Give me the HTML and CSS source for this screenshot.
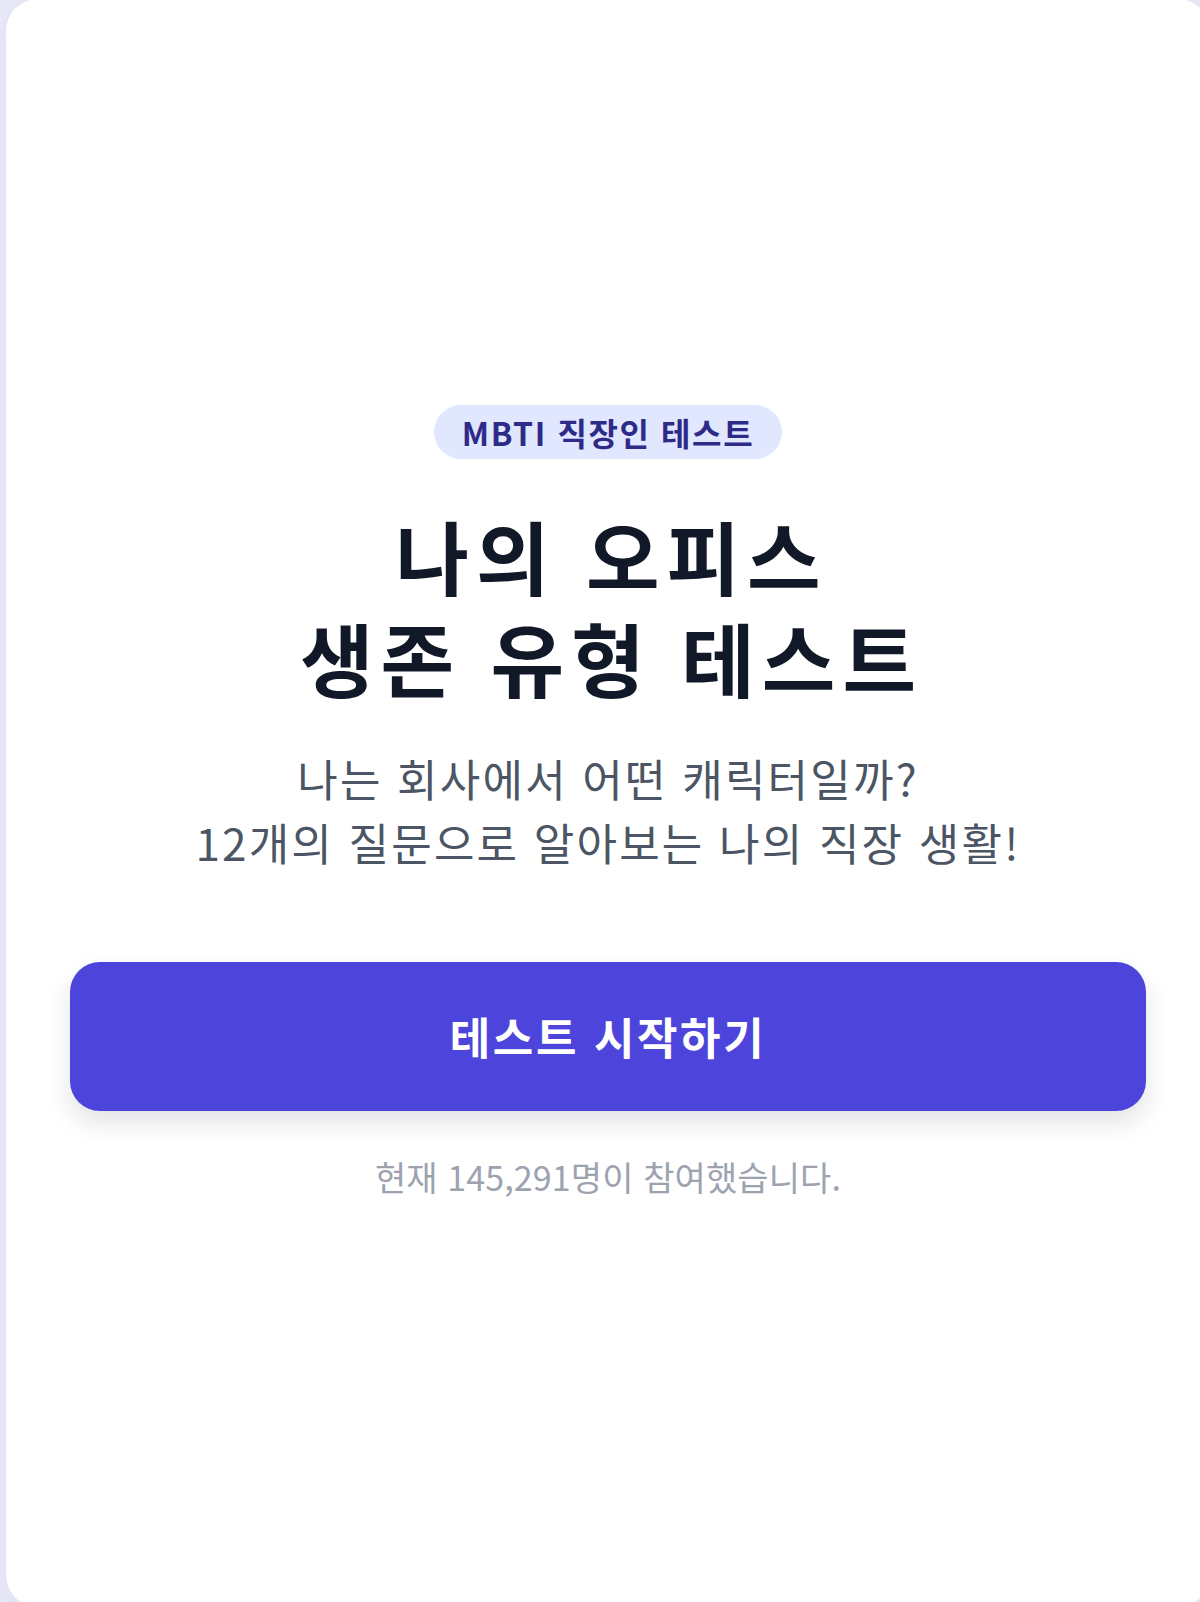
FILE: index.html
```html
<!DOCTYPE html>
<html lang="ko">
<head>
<meta charset="utf-8">
<title>나의 오피스 생존 유형 테스트</title>
<link rel="stylesheet" href="styles.css">
</head>
<body>
<main class="card">
  <div class="intro">
    <span class="badge">MBTI 직장인 테스트</span>
    <h1 class="title">나의 오피스<br>생존 유형 테스트</h1>
    <p class="subtitle">나는 회사에서 어떤 캐릭터일까?<br>12개의 질문으로 알아보는 나의 직장 생활!</p>
    <button class="start" type="button">테스트 시작하기</button>
    <p class="count">현재 145,291명이 참여했습니다.</p>
  </div>
</main>
</body>
</html>
```

FILE: styles.css
```css
html, body {
  margin: 0;
  padding: 0;
}

body {
  width: 1200px;
  height: 1602px;
  overflow: hidden;
  background: #e9eaf6;
  font-family: "Noto Sans CJK KR", "Noto Sans", sans-serif;
}

.card {
  box-sizing: border-box;
  width: 1204px;
  height: 1608px;
  margin: -1px 0 0 6px;
  padding: 0 64px;
  background: #ffffff;
  border-radius: 32px;
  box-shadow: 0 4px 24px rgba(79, 70, 229, 0.08);
  display: flex;
  flex-direction: column;
  justify-content: center;
}

.intro {
  display: flex;
  flex-direction: column;
  align-items: center;
  text-align: center;
}

.badge {
  display: inline-flex;
  align-items: center;
  height: 54px;
  padding: 0 28px;
  border-radius: 27px;
  background: #e0e7ff;
  color: #2e2a87;
  font-size: 32px;
  font-weight: 700;
  letter-spacing: 1.6px;
}

.title {
  margin: 44px 0 0;
  padding-left: 7px;
  font-size: 80px;
  line-height: 102px;
  font-weight: 700;
  color: #111827;
  letter-spacing: 7px;
}

.subtitle {
  margin: 39px 0 0;
  font-size: 44px;
  line-height: 64px;
  font-weight: 400;
  color: #4b5563;
  letter-spacing: 2.2px;
}

.start {
  margin-top: 88px;
  width: 100%;
  height: 149px;
  border: none;
  border-radius: 30px;
  background: #4d45db;
  color: #ffffff;
  font-family: inherit;
  font-size: 44px;
  font-weight: 700;
  letter-spacing: 2.6px;
  box-shadow: 0 12px 24px rgba(17, 24, 39, 0.12);
}

.count {
  margin: 41px 0 0;
  font-size: 34px;
  line-height: 50px;
  color: #9ca3af;
  letter-spacing: 0.1px;
}
```
